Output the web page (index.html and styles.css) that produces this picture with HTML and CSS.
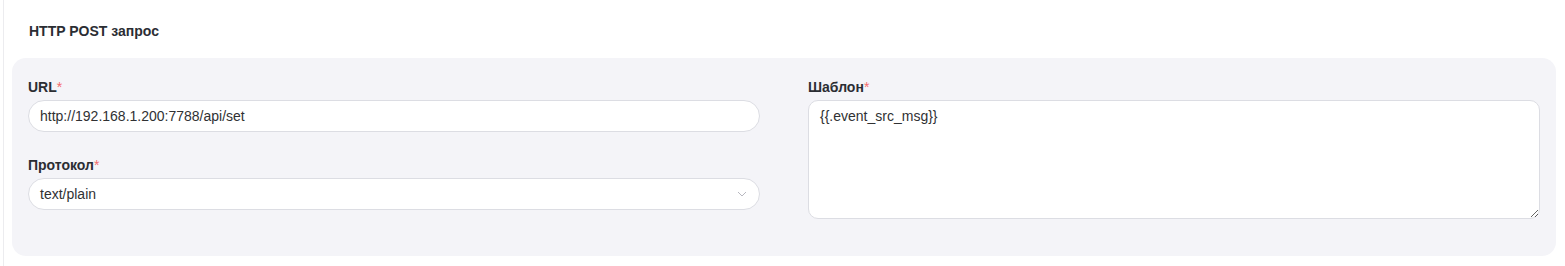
FILE: index.html
```html
<!DOCTYPE html>
<html>
<head>
<meta charset="utf-8">
<link rel="stylesheet" href="styles.css">
</head>
<body>
<div class="card">
  <div class="card-title">HTTP POST запрос</div>
  <div class="panel">
    <div class="col">
      <div class="field">
        <label class="label">URL<span class="req">*</span></label>
        <div class="input">http://192.168.1.200:7788/api/set</div>
      </div>
      <div class="field">
        <label class="label">Протокол<span class="req">*</span></label>
        <div class="input select">
          <span>text/plain</span>
          <svg class="chev" width="10" height="6" viewBox="0 0 10 6"><path d="M1 1l4 4 4-4" fill="none" stroke="#b8b8c0" stroke-width="1"/></svg>
        </div>
      </div>
    </div>
    <div class="col">
      <div class="field">
        <label class="label">Шаблон<span class="req">*</span></label>
        <textarea class="textarea">{{.event_src_msg}}</textarea>
      </div>
    </div>
  </div>
</div>
</body>
</html>
```

FILE: styles.css
```css
* { box-sizing: border-box; }
html, body { margin: 0; padding: 0; background: #fff; }
body {
  font-family: "Liberation Sans", Arial, Helvetica, sans-serif;
  color: #303133;
  font-size: 14px;
}
.card {
  margin-left: 3px;
  border-left: 1px solid #ececef;
  padding: 0 0 10px 8px;
  height: 266px;
}
.card-title {
  font-size: 14px;
  font-weight: 700;
  color: #2b2d33;
  padding: 23px 0 0 17px;
  height: 58px;
  line-height: 16px;
}
.panel {
  background: #f4f4f8;
  border-radius: 14px;
  width: 1544px;
  height: 198px;
  padding: 21px 16px 0 16px;
  display: grid;
  grid-template-columns: 732px 732px;
  column-gap: 48px;
}
.col { display: flex; flex-direction: column; gap: 25px; }
.field { display: flex; flex-direction: column; }
.label {
  font-weight: 700;
  font-size: 14px;
  line-height: 16px;
  color: #2b2d33;
  margin-bottom: 5px;
}
.req { color: #f56c6c; font-weight: 400; }
.input {
  height: 32px;
  background: #fff;
  border: 1px solid #dcdde3;
  border-radius: 16px;
  padding: 0 11px;
  display: flex;
  align-items: center;
  font-size: 14px;
  color: #303133;
}
.select { justify-content: space-between; }
.chev { margin-right: 1px; }
.textarea {
  display: block;
  width: 732px;
  height: 119px;
  border: 1px solid #dcdde3;
  border-radius: 10px;
  background: #fff;
  padding: 6px 11px;
  font-family: "Liberation Sans", Arial, Helvetica, sans-serif;
  font-size: 14px;
  line-height: 18px;
  color: #303133;
  resize: vertical;
  outline: none;
}
```
